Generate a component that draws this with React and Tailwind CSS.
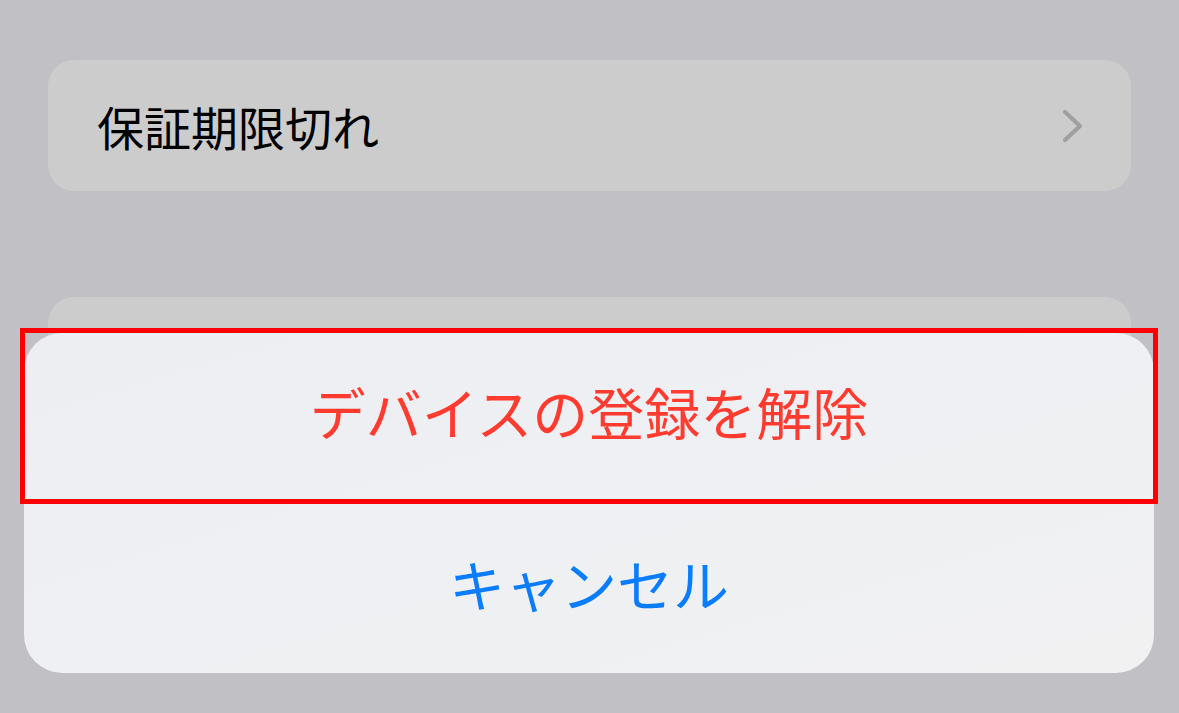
const font = { fontFamily: '"Noto Sans CJK JP", "Noto Sans", sans-serif' };

function Chevron() {
  return (
    <svg width="24" height="34" viewBox="0 0 24 34" fill="none">
      <path
        d="M4 3 L19 17 L4 31"
        stroke="#a0a0a0"
        strokeWidth="4.2"
        strokeLinecap="round"
        strokeLinejoin="round"
      />
    </svg>
  );
}

export default function App() {
  return (
    <div
      className="relative h-[713px] w-full overflow-hidden bg-[#c1c0c5]"
      style={font}
    >
      {/* settings list behind the sheet */}
      <div className="flex flex-col gap-[106px] px-[48px] pt-[60px]">
        <div className="flex h-[131px] items-center justify-between rounded-[26px] bg-[#cccccc] pl-[49px] pr-[46px]">
          <span className="text-[47px] leading-none text-black">保証期限切れ</span>
          <Chevron />
        </div>
        <div className="h-[340px] rounded-[26px] bg-[#cccccc]" />
      </div>

      {/* action sheet */}
      <div className="absolute left-[24px] right-[25px] top-[333px] flex h-[340px] flex-col overflow-hidden rounded-[38px] bg-gradient-to-br from-[#eceef2] via-[#eef0f3] to-[#f1f1f2]">
        <button className="flex h-[170px] items-center justify-center pb-[14px] text-[56px] leading-none text-[#ff3b30]">
          デバイスの登録を解除
        </button>
        <button className="flex h-[170px] items-center justify-center pb-[10px] text-[56px] leading-none text-[#0a7cff]">
          キャンセル
        </button>
      </div>

      {/* highlight outline */}
      <div className="pointer-events-none absolute left-[20px] top-[328px] h-[176px] w-[1138px] border-[5px] border-[#ff0000]" />
    </div>
  );
}
